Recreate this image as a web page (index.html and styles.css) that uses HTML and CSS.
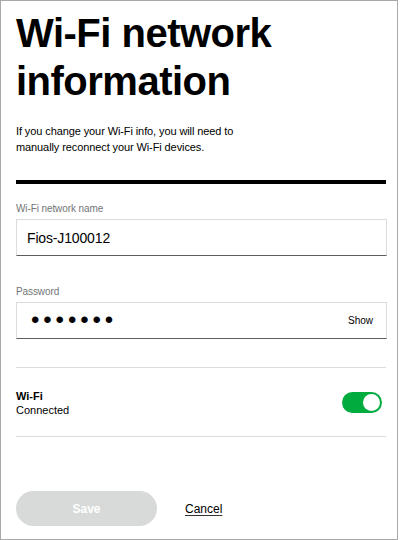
FILE: index.html
```html
<!DOCTYPE html>
<html lang="en">
<head>
<meta charset="utf-8">
<title>Wi-Fi network information</title>
<link rel="stylesheet" href="styles.css">
</head>
<body>
<div class="frame">
  <h1 class="title">Wi-Fi network information</h1>
  <p class="intro">If you change your Wi-Fi info, you will need to manually reconnect your Wi-Fi devices.</p>
  <div class="rule"></div>

  <div class="field field-first">
    <label class="field-label">Wi-Fi network name</label>
    <div class="input">
      <span class="input-value">Fios-J100012</span>
    </div>
  </div>

  <div class="field">
    <label class="field-label">Password</label>
    <div class="input">
      <span class="input-dots">•••••••</span>
      <span class="input-action">Show</span>
    </div>
  </div>

  <div class="divider divider-top"></div>

  <div class="setting">
    <div class="setting-text">
      <div class="setting-name">Wi-Fi</div>
      <div class="setting-status">Connected</div>
    </div>
    <div class="toggle"><span class="toggle-knob"></span></div>
  </div>

  <div class="divider divider-bottom"></div>

  <div class="actions">
    <button class="btn-save" type="button">Save</button>
    <a class="btn-cancel" href="#">Cancel</a>
  </div>
</div>
</body>
</html>
```

FILE: styles.css
```css
* { box-sizing: border-box; }

html, body {
  margin: 0;
  padding: 0;
  background: #fff;
}

body {
  font-family: "Liberation Sans", Arial, sans-serif;
  color: #000;
}

.frame {
  width: 398px;
  height: 540px;
  border: 1px solid #a8a8a8;
  padding: 8px 10px 0 15px;
  overflow: hidden;
}

.title {
  margin: 0;
  font-size: 40px;
  line-height: 48px;
  font-weight: 700;
  letter-spacing: -0.5px;
}

.intro {
  margin: 18px 0 0;
  max-width: 240px;
  font-size: 11px;
  line-height: 16px;
  letter-spacing: -0.1px;
}

.rule {
  margin-top: 25px;
  height: 4px;
  background: #000;
  margin-right: 1px;
}

.field { margin-top: 30px; }
.field-first { margin-top: 19px; }

.field-label {
  display: block;
  font-size: 10px;
  line-height: 12px;
  color: #747676;
  letter-spacing: -0.1px;
}

.input {
  margin-top: 4px;
  height: 37px;
  border: 1px solid #dcdcdc;
  border-bottom: 1px solid #5c5e5e;
  display: flex;
  align-items: center;
  justify-content: space-between;
  padding: 0 13px 0 10px;
}

.input-value {
  font-size: 14px;
  letter-spacing: -0.15px;
}

.input-dots {
  font-size: 24px;
  letter-spacing: 3.9px;
  padding-left: 4px;
  line-height: 1;
  margin-top: -1px;
}

.input-action {
  font-size: 10px;
  color: #000;
}

.divider {
  height: 1px;
  background: #dcdcdc;
  margin-right: 1px;
}
.divider-top { margin-top: 28px; }
.divider-bottom { margin-top: 19px; }

.setting {
  margin-top: 21px;
  display: flex;
  align-items: center;
  justify-content: space-between;
  padding-right: 5px;
}

.setting-name {
  font-size: 11px;
  line-height: 14px;
  font-weight: 700;
}

.setting-status {
  font-size: 11px;
  line-height: 14px;
}

.toggle {
  width: 40px;
  height: 21px;
  border-radius: 11px;
  background: #00ac3e;
  display: flex;
  align-items: center;
  justify-content: flex-end;
  padding-right: 2px;
  margin-top: -2px;
}

.toggle-knob {
  width: 17px;
  height: 17px;
  border-radius: 50%;
  background: #fff;
}

.actions {
  margin-top: 54px;
  display: flex;
  align-items: center;
  gap: 28px;
}

.btn-save {
  width: 141px;
  height: 35px;
  border: none;
  border-radius: 18px;
  background: #d8dada;
  color: #fff;
  font-family: inherit;
  font-size: 12px;
  font-weight: 700;
  padding: 0;
}

.btn-cancel {
  font-size: 12px;
  color: #000;
  text-decoration: underline;
  text-decoration-color: #333;
  text-underline-offset: 2px;
}
```
